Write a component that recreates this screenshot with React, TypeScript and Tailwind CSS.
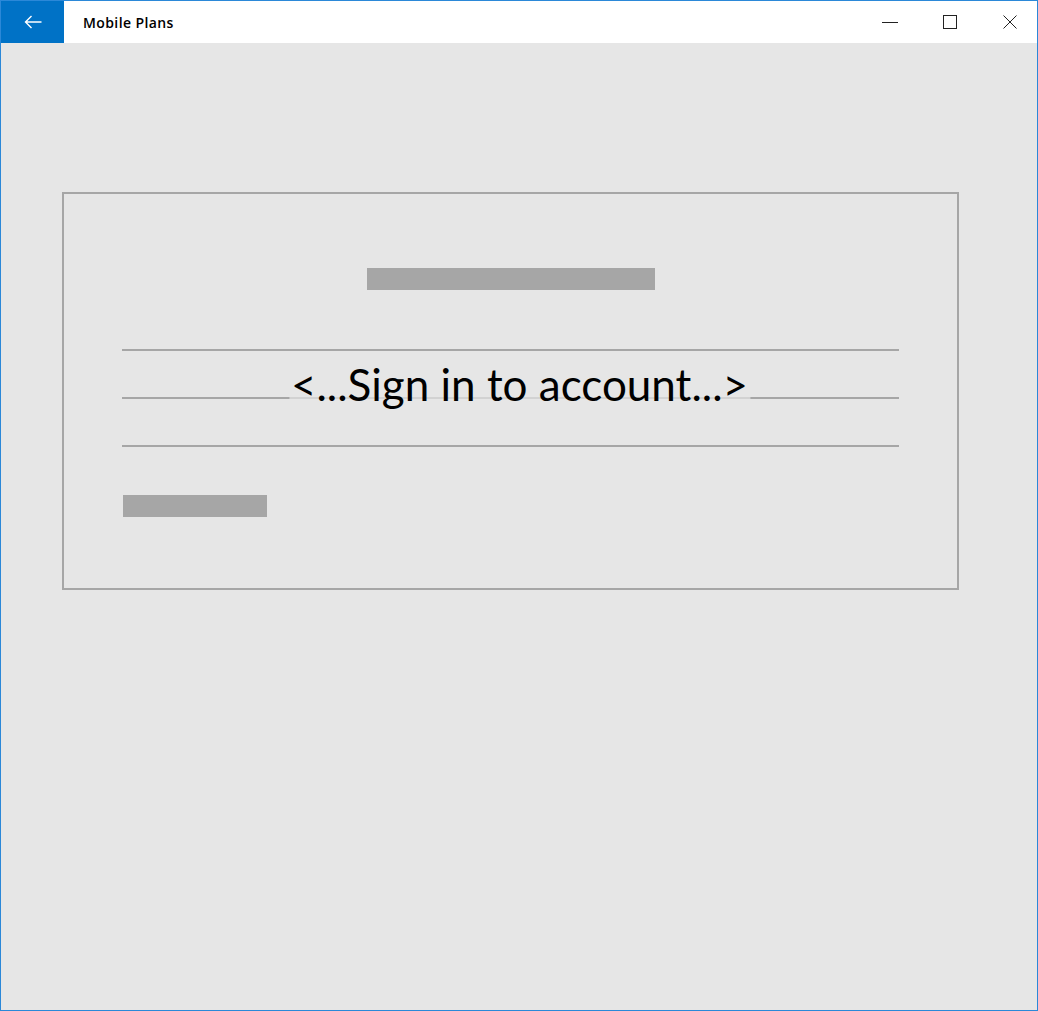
import React from 'react';

// Window chrome + placeholder sign-in card
const TitleBar: React.FC = () => (
  <div className="flex h-[42px] items-stretch bg-white">
    <button className="flex w-[63px] items-center justify-center bg-[#0072c6]">
      <svg width="18" height="14" viewBox="0 0 18 14" fill="none" stroke="white" strokeWidth="1.4">
        <path d="M17.5 7H1.5M7.5 1L1.5 7L7.5 13" />
      </svg>
    </button>
    <div className="flex flex-1 items-center pl-[19px] pt-[1px] text-[14px] font-semibold tracking-[0.4px] text-black">
      Mobile Plans
    </div>
    <div className="flex items-stretch pr-[4px]">
      <div className="flex w-[46px] items-center justify-center">
        <svg width="16" height="16" viewBox="0 0 16 16" stroke="#222" strokeWidth="1">
          <path d="M0 8.5H16" />
        </svg>
      </div>
      <div className="ml-[14px] flex w-[46px] items-center justify-center">
        <svg width="14" height="14" viewBox="0 0 14 14" fill="none" stroke="#222" strokeWidth="1">
          <rect x="0.5" y="0.5" width="13" height="13" />
        </svg>
      </div>
      <div className="ml-[14px] flex w-[46px] items-center justify-center">
        <svg width="14" height="14" viewBox="0 0 14 14" fill="none" stroke="#222" strokeWidth="1">
          <path d="M0.5 0.5L13.5 13.5M13.5 0.5L0.5 13.5" />
        </svg>
      </div>
    </div>
  </div>
);

const Line: React.FC = () => <div className="h-[2px] w-full bg-[#a6a6a6]" />;

export default function App() {
  return (
    <div
      className="flex h-[1011px] w-[1038px] flex-col border border-[#2b88d8] bg-[#e6e6e6]"
      style={{ fontFamily: '"Open Sans", "Noto Sans", sans-serif' }}
    >
      <TitleBar />
      <div className="flex-1 pl-[61px] pt-[149px]">
        <div className="flex h-[398px] w-[897px] flex-col border-2 border-[#a6a6a6] px-[58px] pt-[74px]">
          <div className="mx-auto h-[22px] w-[288px] bg-[#a6a6a6]" />
          <div className="mt-[59px]">
            <Line />
          </div>
          <div className="relative mt-[46px]">
            <Line />
            <div
              className="absolute left-[calc(50%+9px)] top-[-37px] -translate-x-1/2 whitespace-nowrap bg-[#e6e6e6]/70 px-[2px] text-[44px] leading-[48px] text-black"
              style={{ fontFamily: 'Lato, "Open Sans", sans-serif' }}
            >
              &lt;...Sign in to account...&gt;
            </div>
          </div>
          <div className="mt-[46px]">
            <Line />
          </div>
          <div className="ml-[1px] mt-[48px] h-[22px] w-[144px] bg-[#a6a6a6]" />
        </div>
      </div>
    </div>
  );
}
